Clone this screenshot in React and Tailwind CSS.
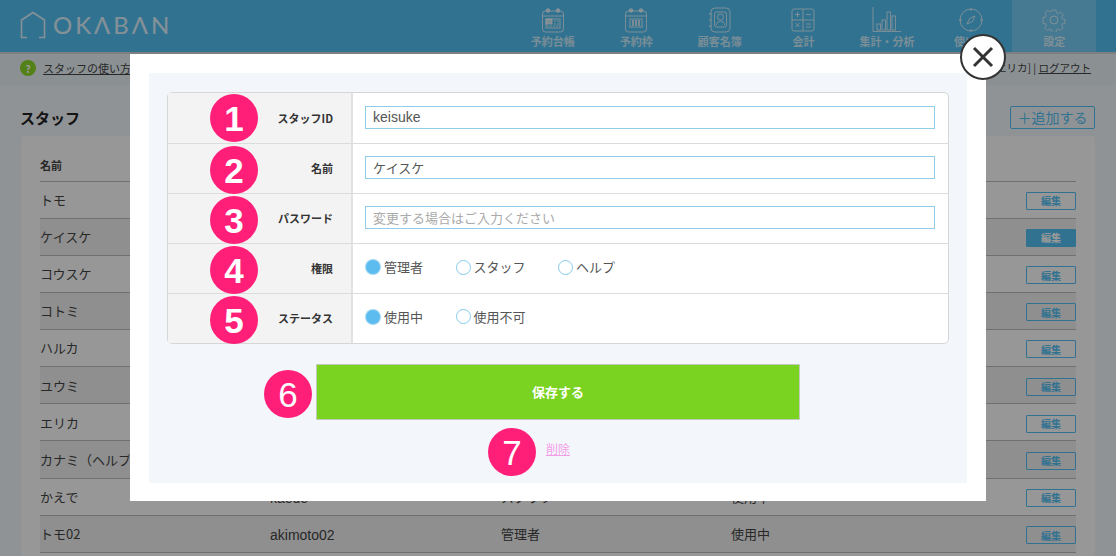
import React from "react";

const jp = "font-['Noto_Sans_CJK_JP','Noto_Sans',sans-serif]";
const latin = "font-['Liberation_Sans','Noto_Sans_CJK_JP',sans-serif] text-[14px]";

const CalendarTop = () => (
  <>
    <rect x="1.5" y="4" width="21" height="21" rx="3" />
    <path d="M1.5 9h21" />
    <circle cx="7" cy="3.5" r="1.8" fill="currentColor" />
    <circle cx="17" cy="3.5" r="1.8" fill="currentColor" />
  </>
);

const navItems = [
  {
    label: "予約台帳",
    icon: (
      <svg className="w-[24px] h-[26px]" viewBox="0 0 24 26" fill="none" stroke="currentColor" strokeWidth="1">
        <CalendarTop />
        <rect x="5" y="12" width="14" height="9" />
        <rect x="5" y="12" width="6" height="5" fill="currentColor" />
        <path d="M13 14h5M13 17h5M6 19h12" strokeDasharray="2 1" />
      </svg>
    ),
  },
  {
    label: "予約枠",
    icon: (
      <svg className="w-[24px] h-[26px]" viewBox="0 0 24 26" fill="none" stroke="currentColor" strokeWidth="1">
        <CalendarTop />
        <rect x="6" y="12" width="12" height="8" />
        <path d="M9 13v6M12 13v6M15 13v6" strokeWidth="2" />
      </svg>
    ),
  },
  {
    label: "顧客名簿",
    icon: (
      <svg className="w-[24px] h-[26px]" viewBox="0 0 24 26" fill="none" stroke="currentColor" strokeWidth="1">
        <rect x="3" y="1" width="19" height="24" rx="4" />
        <rect x="6.5" y="5" width="12" height="15" rx="2" />
        <circle cx="12.5" cy="10" r="3" />
        <path d="M8.5 18c0-5 8-5 8 0M1 7h3M1 13h3M1 19h3" />
      </svg>
    ),
  },
  {
    label: "会計",
    icon: (
      <svg className="w-[24px] h-[24px]" viewBox="0 0 24 24" fill="none" stroke="currentColor" strokeWidth="1">
        <rect x="1" y="1" width="22" height="22" rx="2" />
        <path d="M12 1v22M1 12h22" />
        <path d="M4 6.5h5M6.5 4v5M15 6.5h5M4.5 15l4 4M8.5 15l-4 4M15 16h5M15 19h5" />
      </svg>
    ),
  },
  {
    label: "集計・分析",
    icon: (
      <svg className="w-[30px] h-[26px]" viewBox="0 0 30 26" fill="none" stroke="currentColor" strokeWidth="1">
        <path d="M1 0v24.5h28" />
        <rect x="5" y="17" width="3.5" height="6" />
        <rect x="10" y="13" width="3.5" height="10" />
        <rect x="15" y="5" width="3.5" height="18" />
        <rect x="20" y="9" width="3.5" height="14" />
      </svg>
    ),
  },
  {
    label: "使い方",
    icon: (
      <svg className="w-[24px] h-[24px]" viewBox="0 0 24 24" fill="none" stroke="currentColor" strokeWidth="1">
        <path d="M12 1a11 11 0 0 1 11 11 11 11 0 0 1-11 11A11 11 0 0 1 1 12 11 11 0 0 1 12 1z" />
        <path d="M12 0v3M12 21v3M0 12h3M21 12h3" />
        <path d="M16 8l-2.5 5.5L8 16l2.5-5.5z" />
      </svg>
    ),
  },
  {
    label: "設定",
    active: true,
    icon: (
      <svg className="w-[24px] h-[24px]" viewBox="0 0 24 24" fill="none" stroke="currentColor" strokeWidth="1">
        <path d="M9.7 1h4.6l.6 3.2 1.9.8 2.7-1.8 3.1 3.2-1.8 2.7.8 1.9 3 .6v4.6l-3 .6-.8 1.9 1.8 2.7-3.1 3.1-2.7-1.8-1.9.8-.6 3h-4.6l-.6-3-1.9-.8-2.7 1.8-3.2-3.1 1.8-2.7-.8-1.9-3-.6V9.4l3-.6.8-1.9-1.8-2.7 3.2-3.2 2.7 1.8 1.9-.8z" transform="translate(1.6 1.3) scale(.87)" />
        <circle cx="12" cy="12" r="4" />
      </svg>
    ),
  },
];

const staff = [
  ["トモ", "akimoto", "管理者", "使用中"],
  ["ケイスケ", "keisuke", "管理者", "使用中"],
  ["コウスケ", "kosuke", "スタッフ", "使用中"],
  ["コトミ", "kotomi", "スタッフ", "使用中"],
  ["ハルカ", "haruka", "スタッフ", "使用中"],
  ["ユウミ", "yumi", "スタッフ", "使用中"],
  ["エリカ", "erika", "管理者", "使用中"],
  ["カナミ（ヘルプ）", "kanami", "ヘルプ", "使用中"],
  ["かえで", "kaede", "スタッフ", "使用中"],
  ["トモ02", "akimoto02", "管理者", "使用中"],
];

const Badge = ({ n, className }) => (
  <span
    className={`absolute w-[48px] h-[48px] rounded-full bg-[#ff1f78] text-white flex items-center justify-center text-[35px] leading-none font-['Liberation_Sans',sans-serif] ${className}`}
  >
    {n}
  </span>
);

const Radio = ({ label, checked }) => (
  <label className="flex items-center gap-[3px] text-[13px] text-[#555]">
    {checked ? (
      <span className="w-[14px] h-[14px] mr-[1px] rounded-full bg-[#5cbcf0] shadow-[0_0_0_1px_#a5d9f3]" />
    ) : (
      <span className="w-[15px] h-[15px] rounded-full bg-white border border-[#84cbee]" />
    )}
    {label}
  </label>
);

const FormRow = ({ n, label, children, first }) => (
  <div className={`flex ${first ? "h-[50px]" : "h-[50px] border-t border-[#dcdcdc]"}`}>
    <div className="relative w-[185px] shrink-0 bg-[#f3f3f3] border-r-2 border-[#e2e2e2] flex items-center justify-end pr-[18px] text-[11px] font-bold text-[#333]">
      <Badge n={n} className={`left-[42px] ${first ? "top-[1px]" : "top-[2px]"}`} />
      {label}
    </div>
    <div className="flex-1 flex items-center px-[13px]">{children}</div>
  </div>
);

const TextField = ({ value, placeholder, className }) => (
  <input
    readOnly
    value={value}
    placeholder={placeholder}
    className={`w-[570px] h-[23px] -ml-[1px] -mt-[2px] px-[7px] bg-white border-[1.5px] border-[#8fcde8] text-[#555] placeholder:text-[#aaa] outline-none ${className}`}
  />
);

export default function App() {
  return (
    <div className={`relative w-[1116px] h-[556px] overflow-hidden bg-[#f0f6f9] ${jp}`}>
      <header className="h-[54px] bg-[#54bff2] border-b-2 border-[#d0d5d8] flex justify-between pr-[20px]">
        <div className="flex items-center pl-[20px] text-white/80 pb-[2px]">
          <svg className="w-[26px] h-[28px]" viewBox="0 0 26 28" fill="none" stroke="currentColor" strokeWidth="1.6">
            <path d="M7 26.5H1.5V9L13 1.5 24.5 9v17.5H19" />
          </svg>
          <span className="ml-[7px] text-[24px] font-normal tracking-[3px] font-['Lato',sans-serif]">OKΛBΛN</span>
        </div>
        <nav className="flex">
          {navItems.map((item) => (
            <div
              key={item.label}
              className={`w-[83.6px] flex flex-col items-center pt-[6px] text-white/70 ${item.active ? "bg-white/20" : ""}`}
            >
              <div className="h-[28px] flex items-center">{item.icon}</div>
              <span className="text-[11px] font-bold leading-[14px]">{item.label}</span>
            </div>
          ))}
        </nav>
      </header>

      <div className="h-[31px] bg-[#e8f0f5] flex items-center justify-between pl-[20px] pr-[25px] pb-[3px] text-[11px] text-[#444]">
        <div className="flex items-center gap-[7px]">
          <span className="w-[16px] h-[16px] rounded-full bg-[#8cd628] text-white text-[10px] font-bold flex items-center justify-center">?</span>
          <a className="underline">スタッフの使い方ガイド</a>
        </div>
        <div className="text-[10.5px]">
          ログイン中[エリカ] | <a className="underline">ログアウト</a>
        </div>
      </div>

      <main className="pl-[21px] pr-[21px] pt-[21px]">
        <div className="flex items-center justify-between h-[23px] mb-[7px]">
          <h1 className="text-[15px] font-bold text-[#222] pt-[1px] -ml-[1px]">スタッフ</h1>
          <button className="w-[85px] h-[23px] border border-[#54bff2] rounded-[2px] text-[14px] text-[#54bff2]">＋追加する</button>
        </div>
        <div className="bg-[#fcfcfc] rounded-[4px] px-[19px] pt-[21px] pb-[20px]">
          <table className="w-full table-fixed text-[13px] text-[#444] border-collapse">
            <thead>
              <tr className="h-[24px] text-left text-[11px] font-bold border-b border-[#bbb] align-top">
                <th className="w-[230px] font-bold">名前</th>
                <th className="w-[231px] font-bold">スタッフID</th>
                <th className="w-[230px] font-bold">権限</th>
                <th className="font-bold">ステータス</th>
                <th className="w-[60px]" />
              </tr>
            </thead>
            <tbody>
              {staff.map((row, i) => (
                <tr key={row[0]} className={`h-[37.15px] border-b border-[#bbb] ${i % 2 ? "bg-[#eeeeee]" : ""}`}>
                  <td>{row[0]}</td>
                  <td className={`pt-[3px] ${latin}`}>{row[1]}</td>
                  <td>{row[2]}</td>
                  <td>{row[3]}</td>
                  <td className="text-right">
                    <button
                      className={`w-[50px] h-[18px] border border-[#54bff2] rounded-[1px] text-[10px] font-bold align-middle ${
                        i === 1 ? "bg-[#54bff2] text-white" : "text-[#54bff2]"
                      }`}
                    >
                      編集
                    </button>
                  </td>
                </tr>
              ))}
            </tbody>
          </table>
        </div>
      </main>

      {/* dimmed backdrop + modal */}
      <div className="absolute inset-0 bg-black/40" />
      <div className="absolute left-[130px] top-[54px] w-[856px] h-[447px] bg-white p-[19px]">
        <div className="relative h-[410px] bg-[#f3f6fb] pt-[19px] px-[18px]">
          <div className="bg-white border border-[#d6d6d6] rounded-[5px]">
            <FormRow n="1" label="スタッフID" first>
              <TextField value="keisuke" className={latin} />
            </FormRow>
            <FormRow n="2" label="名前">
              <TextField value="ケイスケ" className="text-[13px]" />
            </FormRow>
            <FormRow n="3" label="パスワード">
              <TextField value="" placeholder="変更する場合はご入力ください" className="text-[13px]" />
            </FormRow>
            <FormRow n="4" label="権限">
              <div className="flex gap-[32.5px] pb-[3px]">
                <Radio label="管理者" checked />
                <Radio label="スタッフ" />
                <Radio label="ヘルプ" />
              </div>
            </FormRow>
            <FormRow n="5" label="ステータス">
              <div className="flex gap-[32.5px] pb-[4px]">
                <Radio label="使用中" checked />
                <Radio label="使用不可" />
              </div>
            </FormRow>
          </div>
          <div className="flex flex-col items-center">
            <button className="mt-[20px] w-[484px] h-[56px] bg-[#7ad321] border border-[#c4c8bd] rounded-[1px] text-white text-[13px] font-bold">
              保存する
            </button>
            <a className="mt-[20px] text-[12px] text-[#f59ee8] underline">削除</a>
          </div>
          <Badge n="6" className="left-[115px] top-[297px]" />
          <Badge n="7" className="left-[339px] top-[355px]" />
        </div>
      </div>
      <button className="absolute left-[960px] top-[34px] w-[46px] h-[46px] rounded-full bg-white border-2 border-[#333] flex items-center justify-center">
        <svg className="w-[24px] h-[24px]" viewBox="0 0 24 24" fill="none" stroke="#333" strokeWidth="3">
          <path d="M3 3l18 18M21 3L3 21" />
        </svg>
      </button>
    </div>
  );
}
